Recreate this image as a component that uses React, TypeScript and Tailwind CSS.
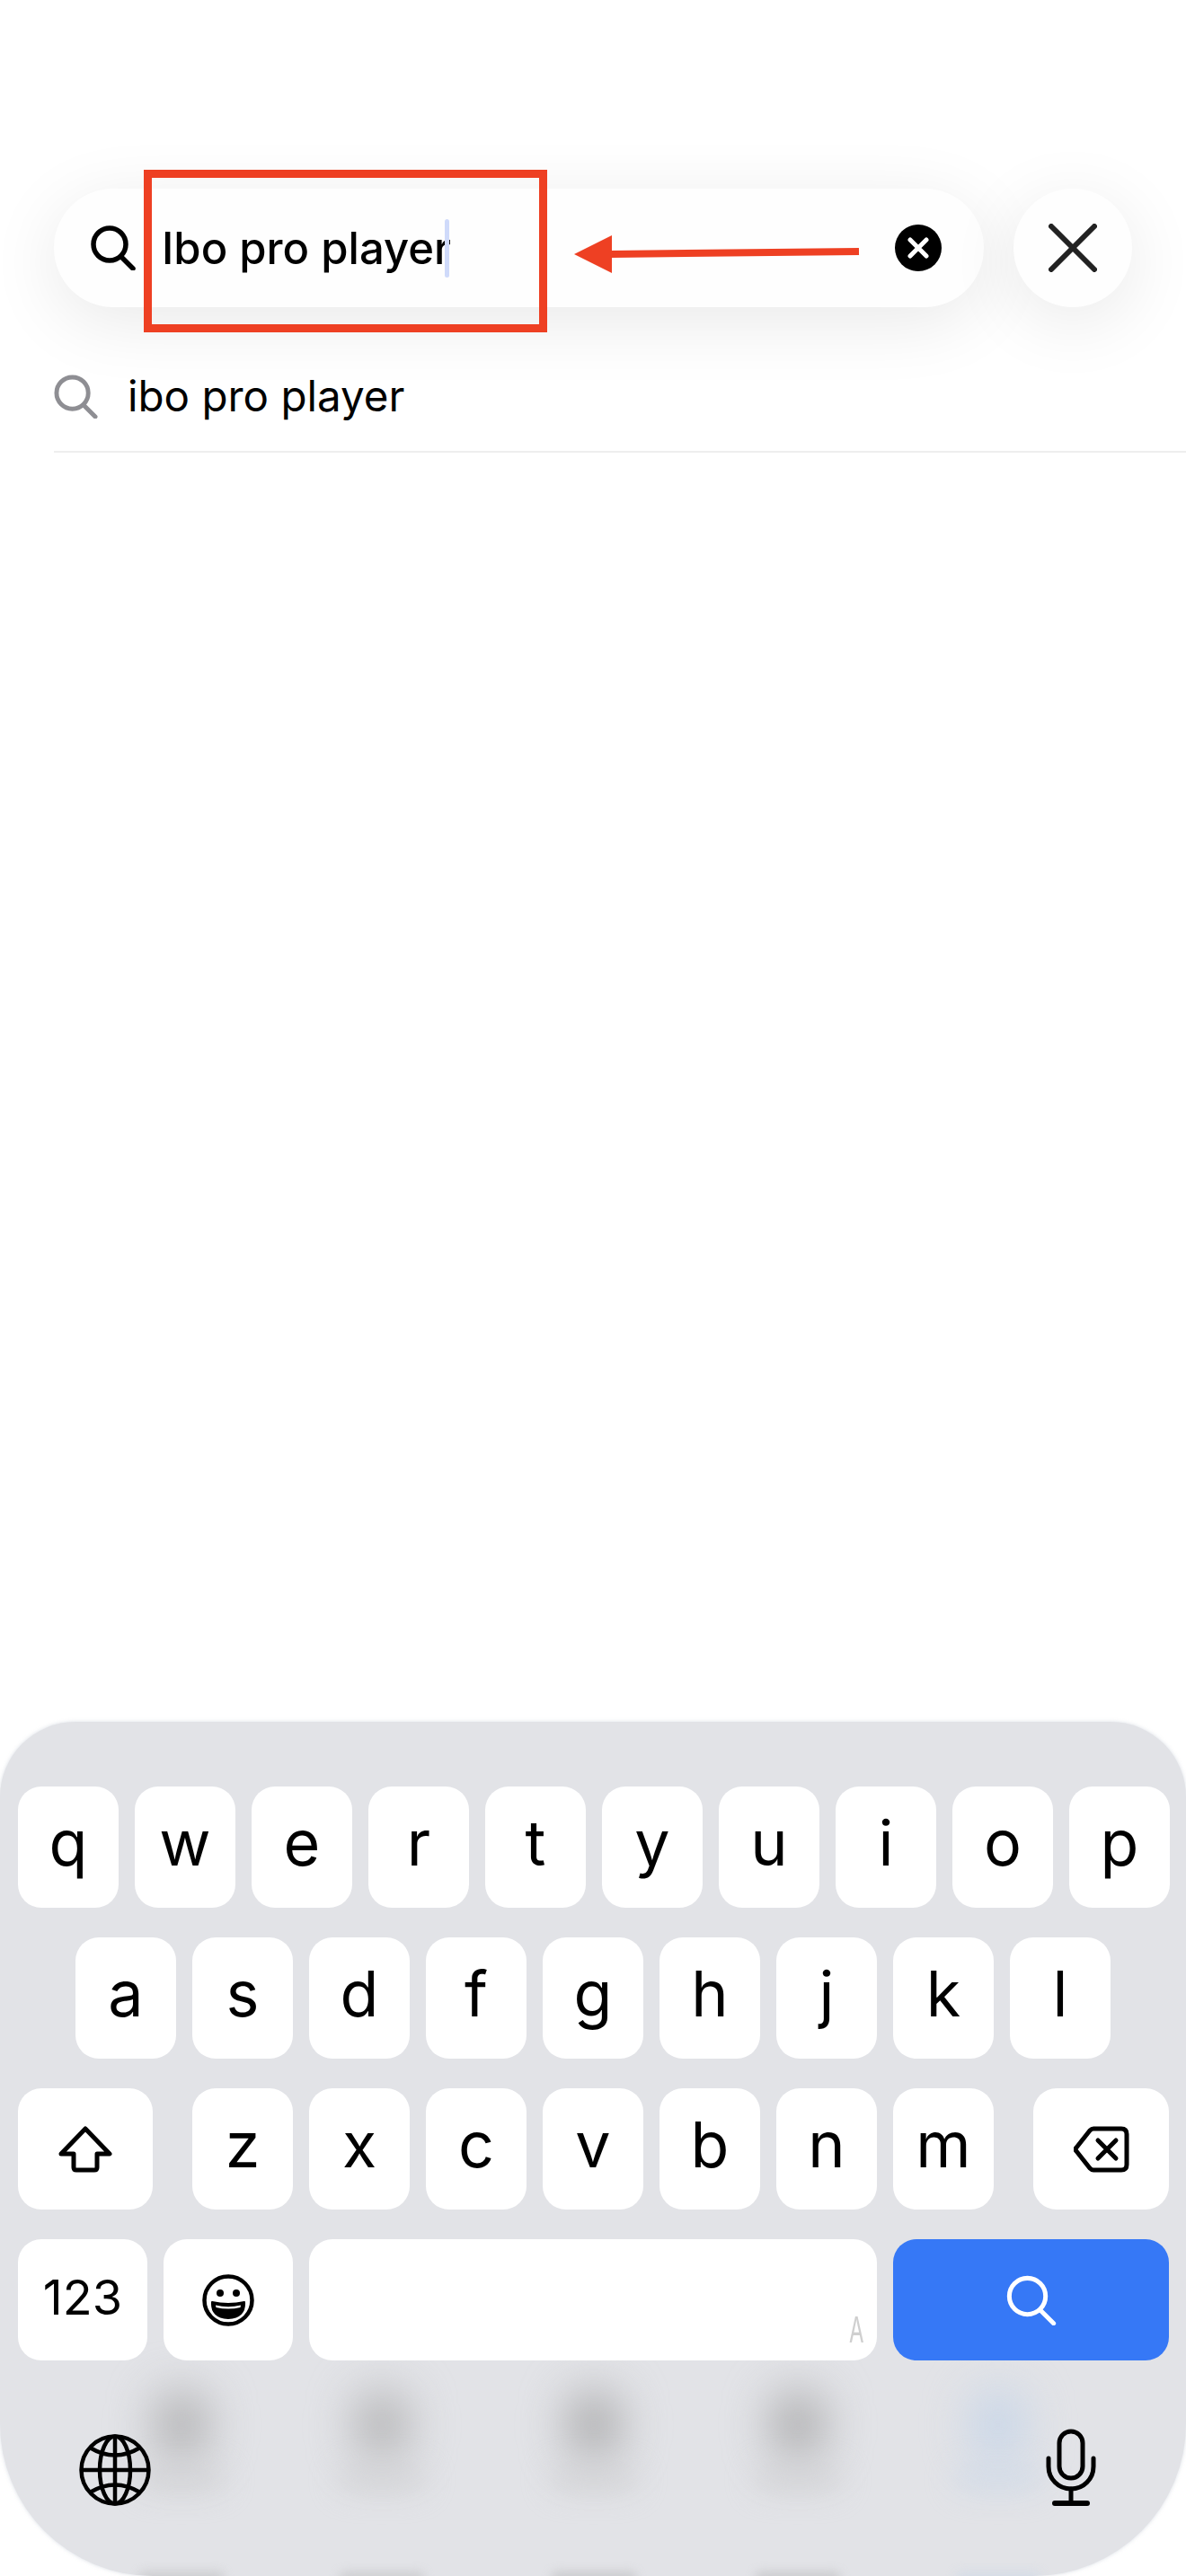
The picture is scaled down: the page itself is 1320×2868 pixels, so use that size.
import { ReactNode } from "react";

const rowOne = ["q", "w", "e", "r", "t", "y", "u", "i", "o", "p"];
const rowTwo = ["a", "s", "d", "f", "g", "h", "j", "k", "l"];
const rowThree = ["z", "x", "c", "v", "b", "n", "m"];

function SearchGlyph({ className, stroke = 5.5 }: { className: string; stroke?: number }) {
  return (
    <svg viewBox="0 0 50 50" fill="none" stroke="currentColor" strokeWidth={stroke} strokeLinecap="round" className={className}>
      <circle cx="21" cy="21" r="18" />
      <path d="M34 35 L47 48" />
    </svg>
  );
}

function Key({ className = "w-[112px] bg-white", children }: { className?: string; children: ReactNode }) {
  return (
    <div className={`relative flex h-[135px] shrink-0 items-center justify-center rounded-[26px] ${className}`}>
      {children}
    </div>
  );
}

function Letter({ value }: { value: string }) {
  return (
    <Key>
      <span className="-mt-[10px] text-[70px] leading-none text-black">{value}</span>
    </Key>
  );
}

function ShiftIcon() {
  return (
    <svg viewBox="0 0 60 52" fill="none" stroke="black" strokeWidth="5" strokeLinejoin="round" className="h-[52px] w-[60px]">
      <path d="M30 3 L57 31 H43 V46 Q43 49 40 49 H20 Q17 49 17 46 V31 H3 Z" />
    </svg>
  );
}

function DeleteIcon() {
  return (
    <svg viewBox="0 0 62 52" fill="none" stroke="black" strokeWidth="5" strokeLinecap="round" strokeLinejoin="round" className="h-[52px] w-[62px]">
      <path d="M22 3 H53 Q59 3 59 9 V43 Q59 49 53 49 H22 Q20 49 18 47 L3 28 Q1 26 3 24 L18 5 Q20 3 22 3 Z" />
      <path d="M27 16 L47 36 M47 16 L27 36" />
    </svg>
  );
}

function SmileIcon() {
  return (
    <svg viewBox="0 0 58 58" className="h-[58px] w-[58px]">
      <circle cx="29" cy="29" r="26.5" fill="none" stroke="black" strokeWidth="4.5" />
      <circle cx="20" cy="21" r="4" fill="black" />
      <circle cx="38" cy="21" r="4" fill="black" />
      <path d="M11 31 Q29 35 47 31 Q48 48 29 49 Q10 48 11 31 Z" fill="black" stroke="black" strokeWidth="2" strokeLinejoin="round" />
      <path d="M15 34.5 Q29 38 43 34.5 L42.5 37 Q29 40 15.500 37 Z" fill="white" />
    </svg>
  );
}

function GlobeIcon() {
  return (
    <svg viewBox="0 0 80 80" fill="none" stroke="black" strokeWidth="4.5" className="h-[80px] w-[80px]">
      <circle cx="40" cy="40" r="37.5" />
      <ellipse cx="40" cy="40" rx="17" ry="37.5" />
      <path d="M40 3 V77 M3 40 H77" />
      <path d="M12 15 Q40 32 68 15 M12 65 Q40 48 68 65" />
    </svg>
  );
}

function MicIcon() {
  return (
    <svg viewBox="0 0 56 86" fill="none" stroke="black" strokeWidth="5" strokeLinecap="round" className="h-[86px] w-[56px]">
      <rect x="15" y="3" width="26" height="52" rx="13" />
      <path d="M3 33 V42 C3 56 14 67 28 67 C42 67 53 56 53 42 V33" />
      <path d="M28 67 V82" />
      <path d="M10 83 H46" strokeWidth="6" />
    </svg>
  );
}

function BlurredDock() {
  const spots = [
    { left: "left-[202px]", tint: "bg-[#adadae]", label: "bg-[#cbcbcd]" },
    { left: "left-[425px]", tint: "bg-[#b0b0b1]", label: "bg-[#cbcbcd]" },
    { left: "left-[661px]", tint: "bg-[#a8a8a9]", label: "bg-[#cbcbcd]" },
    { left: "left-[888px]", tint: "bg-[#a9a9aa]", label: "bg-[#cbcbcd]" },
    { left: "left-[1111px]", tint: "bg-[#c4d4e8]", label: "bg-[#c8d6e8]" },
  ];
  return (
    <>
      {spots.map((spot) => (
        <div key={spot.left}>
          <div className={`absolute top-[745px] h-[76px] w-[56px] -translate-x-1/2 rounded-full blur-[26px] ${spot.left} ${spot.tint}`} />
          <div className={`absolute top-[828px] h-[30px] w-[100px] -translate-x-1/2 rounded-full opacity-50 blur-[16px] ${spot.left} ${spot.label}`} />
          <div className={`absolute top-[946px] h-[14px] w-[96px] -translate-x-1/2 rounded-full opacity-40 blur-[6px] ${spot.left} ${spot.tint}`} />
        </div>
      ))}
    </>
  );
}

function Keyboard() {
  return (
    <div className="relative mt-auto h-[951px] overflow-hidden rounded-t-[84px] rounded-b-[170px] bg-[#e2e3e7] pt-[72px] shadow-[0_0_4px_rgba(150,160,180,0.35)]">
      <BlurredDock />
      <div className="relative flex flex-col gap-[33px]">
        <div className="flex gap-[18px] pl-[20px]">
          {rowOne.map((k) => (
            <Letter key={k} value={k} />
          ))}
        </div>
        <div className="flex gap-[18px] pl-[84px]">
          {rowTwo.map((k) => (
            <Letter key={k} value={k} />
          ))}
        </div>
        <div className="flex gap-[18px] pl-[20px]">
          <Key className="mr-[26px] w-[150px] bg-white">
            <ShiftIcon />
          </Key>
          {rowThree.map((k) => (
            <Letter key={k} value={k} />
          ))}
          <Key className="ml-[26px] w-[151px] bg-white">
            <DeleteIcon />
          </Key>
        </div>
        <div className="flex gap-[18px] pl-[20px]">
          <Key className="w-[144px] bg-white">
            <span className="-mt-[6px] text-[54px] leading-none text-black">123</span>
          </Key>
          <Key className="w-[144px] bg-white">
            <SmileIcon />
          </Key>
          <Key className="w-[632px] bg-white">
            <span className="absolute right-[14px] bottom-[14px] origin-bottom-right scale-x-[0.6] text-[40px] leading-none text-[#cfcfcf]">A</span>
          </Key>
          <Key className="w-[307px] bg-[#3678f6]">
            <SearchGlyph className="h-[56px] w-[56px] text-white" stroke={4.5} />
          </Key>
        </div>
      </div>
      <div className="relative mt-[76px] flex items-end justify-between pr-[100px] pl-[88px]">
        <GlobeIcon />
        <MicIcon />
      </div>
    </div>
  );
}

export default function App() {
  return (
    <div className="relative flex h-[2868px] w-[1320px] flex-col overflow-hidden bg-white font-[Inter,sans-serif]">
      <div className="mt-[210px] flex gap-[33px] pl-[60px]">
        <div className="flex h-[132px] w-[1035px] items-center rounded-full bg-[#fefefe] pl-[41px] shadow-[0_16px_80px_rgba(0,0,0,0.09)]">
          <SearchGlyph className="h-[50px] w-[50px] text-black" />
          <span className="ml-[29px] text-[49px] leading-none font-medium text-black">Ibo pro player</span>
          <span className="-ml-[7px] h-[65px] w-[5px] rounded-full bg-[#cfdafa]" />
          <svg viewBox="0 0 52 52" className="mr-[47px] ml-auto h-[52px] w-[52px]">
            <circle cx="26" cy="26" r="26" fill="black" />
            <path d="M17 17 L35 35 M35 17 L17 35" stroke="white" strokeWidth="5" strokeLinecap="round" />
          </svg>
        </div>
        <div className="flex h-[132px] w-[132px] items-center justify-center rounded-full bg-[#fefefe] shadow-[0_16px_80px_rgba(0,0,0,0.09)]">
          <svg viewBox="0 0 54 54" className="h-[54px] w-[54px]">
            <path d="M3 3 L51 51 M51 3 L3 51" stroke="#222222" strokeWidth="6" strokeLinecap="round" />
          </svg>
        </div>
      </div>
      <div className="ml-[60px] flex h-[162px] items-center gap-[33px] border-b-2 border-[#eeeeee] pt-[38px]">
        <SearchGlyph className="h-[49px] w-[49px] text-[#8e8e93]" stroke={5} />
        <span className="text-[47.5px] leading-none text-black">ibo pro player</span>
      </div>
      <Keyboard />

      {/* red annotation over the screenshot */}
      <div className="absolute top-[189px] left-[160px] h-[181px] w-[449px] border-[9px] border-[#ee4023]" />
      <svg viewBox="0 0 320 50" className="absolute top-[258px] left-[639px] h-[50px] w-[320px]">
        <path d="M0 25 L42 4 V46 Z" fill="#ee4023" />
        <path d="M40 25 L317 22" stroke="#ee4023" strokeWidth="8" />
      </svg>
    </div>
  );
}
